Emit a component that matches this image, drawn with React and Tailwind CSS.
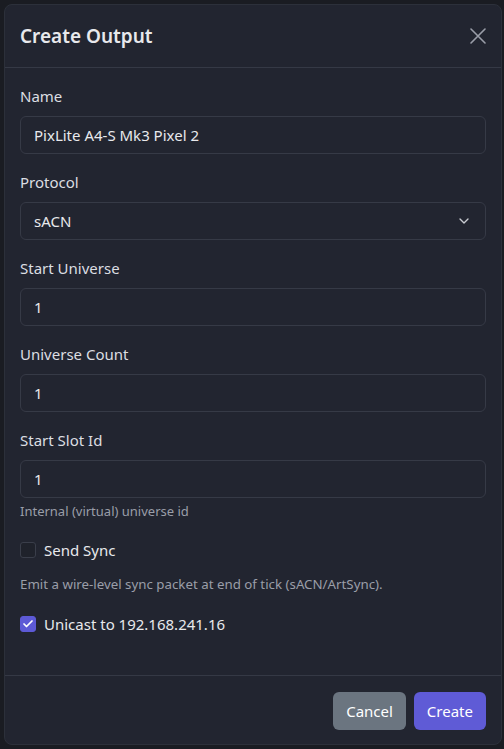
import { ChevronDown, Check } from 'lucide-react'

const FONT = { fontFamily: '"Noto Sans", "Open Sans", sans-serif' }
const INPUT_CLASS =
  'h-[38px] w-full rounded-md border border-[#363a46] bg-[#222530] px-[13px] text-[15px] text-[#e8e9ec] outline-none'

function Field({ label, value, select = false }) {
  return (
    <div>
      <label className="mb-[10px] block text-[15px] leading-5 text-[#dcdee2]">{label}</label>
      {select ? (
        <div className={`${INPUT_CLASS} flex items-center justify-between`}>
          <span>{value}</span>
          <ChevronDown className="size-4 text-[#c9ccd2]" strokeWidth={2} />
        </div>
      ) : (
        <div className={`${INPUT_CLASS} flex items-center`}>{value}</div>
      )}
    </div>
  )
}

function CheckRow({ checked, label }) {
  return (
    <div className="flex items-center gap-[8px]">
      <span
        className={`grid size-4 place-items-center rounded-[3px] border ${
          checked ? 'border-[#5d5ad6] bg-[#5d5ad6]' : 'border-[#3a3e4a] bg-[#1f222b]'
        }`}
      >
        {checked ? <Check className="size-3 text-white" strokeWidth={3.5} /> : null}
      </span>
      <span className="text-[15px] leading-5 text-[#e8e9ec]">{label}</span>
    </div>
  )
}

export default function App() {
  return (
    <div style={FONT} className="h-[749px] w-[504px] overflow-hidden bg-[#1a1c22] p-[4px] pr-[2px]">
      <div className="flex h-[741px] flex-col rounded-[8px] border border-[#2c303a] bg-[#222530]">
        <div className="flex h-[63px] shrink-0 items-center justify-between border-b border-[#353945] pl-[15px] pr-[15px]">
          <h2 className="text-[19px] font-semibold text-[#e8e9ec]">Create Output</h2>
          <svg width="16" height="16" viewBox="0 0 16 16" className="text-[#9a9ea8]">
            <path d="M1 1L15 15M15 1L1 15" stroke="currentColor" strokeWidth="1.6" strokeLinecap="round" />
          </svg>
        </div>

        <div className="flex flex-1 flex-col px-[15px] pt-[18px]">
          <div className="flex flex-col gap-[18px]">
            <Field label="Name" value="PixLite A4-S Mk3 Pixel 2" />
            <Field label="Protocol" value="sACN" select />
            <Field label="Start Universe" value="1" />
            <Field label="Universe Count" value="1" />
            <Field label="Start Slot Id" value="1" />
          </div>
          <p className="mt-[3px] text-[13px] leading-5 text-[#9a9ea8]">Internal (virtual) universe id</p>
          <div className="mt-[19px]">
            <CheckRow label="Send Sync" />
          </div>
          <p className="mt-[14px] text-[13.3px] leading-5 text-[#9a9ea8]">
            Emit a wire-level sync packet at end of tick (sACN/ArtSync).
          </p>
          <div className="mt-[20px]">
            <CheckRow checked label="Unicast to 192.168.241.16" />
          </div>
        </div>

        <div className="flex h-[69px] shrink-0 items-start justify-end gap-2 border-t border-[#353945] pr-[15px] pt-[16px]">
          <button className="h-[38px] rounded-md bg-[#6b7580] px-[13px] text-[15px] text-white">Cancel</button>
          <button className="h-[38px] rounded-md bg-[#5f5bd6] px-[13px] text-[15px] text-white">Create</button>
        </div>
      </div>
    </div>
  )
}
